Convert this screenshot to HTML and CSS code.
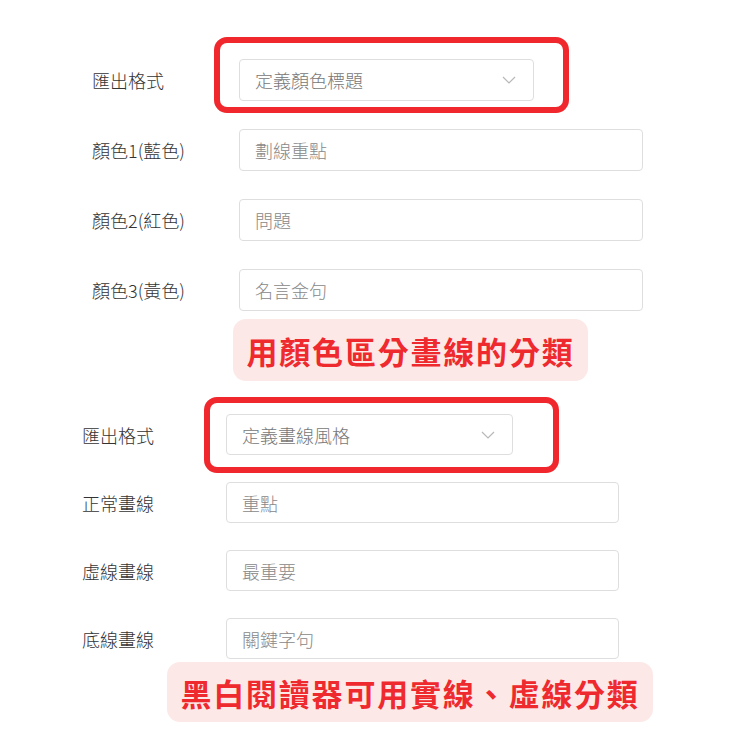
FILE: index.html
```html
<!DOCTYPE html>
<html lang="zh-Hant">
<head>
    <meta charset="UTF-8">
    <meta name="viewport" content="width=device-width, initial-scale=1.0">
    <title>匯出格式</title>
    <link rel="stylesheet" href="styles.css">
</head>
<body>
    <!-- 顏色分類 -->
    <div class="panel panel-color">
        <div class="form-row">
            <label>匯出格式</label>
            <div class="select-wrap">
                <div class="select">
                    <span>定義顏色標題</span>
                    <svg class="chevron" width="14" height="8" viewBox="0 0 14 8"><path d="M1 1 L7 7 L13 1" fill="none" stroke="#b8b8b8" stroke-width="1.2"/></svg>
                </div>
                <span class="mark"></span>
            </div>
        </div>
        <div class="form-row">
            <label>顏色1(藍色)</label>
            <input type="text" placeholder="劃線重點">
        </div>
        <div class="form-row">
            <label>顏色2(紅色)</label>
            <input type="text" placeholder="問題">
        </div>
        <div class="form-row">
            <label>顏色3(黃色)</label>
            <input type="text" placeholder="名言金句">
        </div>
        <div class="note">用顏色區分畫線的分類</div>
    </div>

    <!-- 畫線風格 -->
    <div class="panel panel-style">
        <div class="form-row">
            <label>匯出格式</label>
            <div class="select-wrap">
                <div class="select">
                    <span>定義畫線風格</span>
                    <svg class="chevron" width="14" height="8" viewBox="0 0 14 8"><path d="M1 1 L7 7 L13 1" fill="none" stroke="#b8b8b8" stroke-width="1.2"/></svg>
                </div>
                <span class="mark"></span>
            </div>
        </div>
        <div class="form-row">
            <label>正常畫線</label>
            <input type="text" placeholder="重點">
        </div>
        <div class="form-row">
            <label>虛線畫線</label>
            <input type="text" placeholder="最重要">
        </div>
        <div class="form-row">
            <label>底線畫線</label>
            <input type="text" placeholder="關鍵字句">
        </div>
        <div class="note">黑白閱讀器可用實線、虛線分類</div>
    </div>
</body>
</html>
```

FILE: styles.css
```css
body {
    margin: 0;
    background-color: #fff;
    font-family: "Noto Sans CJK TC", "Noto Sans", sans-serif;
    color: #333;
}

.panel {
    display: flex;
    flex-direction: column;
}

.panel-color {
    padding: 59px 0 0 92px;
    gap: 28px;
}

.panel-style {
    padding: 0 0 0 82px;
    margin-top: 33px;
    gap: 27px;
}

.form-row {
    display: grid;
    align-items: center;
}

.panel-color .form-row {
    grid-template-columns: 147px 404px;
    height: 42px;
}

.panel-style .form-row {
    grid-template-columns: 144px 393px;
    height: 41px;
}

label {
    font-size: 18px;
    font-weight: 300;
    color: #333;
    white-space: nowrap;
}

input[type="text"],
.select {
    box-sizing: border-box;
    height: 100%;
    border: 1px solid #dedede;
    border-radius: 4px;
    font-family: inherit;
    font-size: 18px;
    font-weight: 300;
    color: #777;
    background-color: #fff;
}

input[type="text"] {
    width: 100%;
    padding: 0 15px;
    outline: none;
}

input[type="text"]::placeholder {
    color: #888;
}

.select-wrap {
    position: relative;
    height: 100%;
}

.panel-color .select-wrap {
    width: 295px;
}

.panel-style .select-wrap {
    width: 287px;
}

.select {
    display: flex;
    align-items: center;
    justify-content: space-between;
    padding: 0 17px 0 15px;
}

/* red annotation frame drawn over the dropdown */
.mark {
    position: absolute;
    border: 6px solid #f0282d;
    border-radius: 13px;
    pointer-events: none;
}

.panel-color .mark {
    top: -22px;
    bottom: -12px;
    left: -25px;
    right: -35px;
}

.panel-style .mark {
    top: -17px;
    bottom: -18px;
    left: -22px;
    right: -46px;
}

.note {
    display: flex;
    align-items: center;
    justify-content: center;
    align-self: flex-start;
    background-color: #fde8e8;
    color: #ee2a2e;
    font-weight: 700;
    font-size: 31px;
    letter-spacing: 1.8px;
    border-radius: 13px;
}

.panel-color .note {
    margin: -20px 0 0 141px;
    width: 355px;
    height: 62px;
}

.panel-style .note {
    margin: -24px 0 0 85px;
    width: 486px;
    height: 60px;
}
```
